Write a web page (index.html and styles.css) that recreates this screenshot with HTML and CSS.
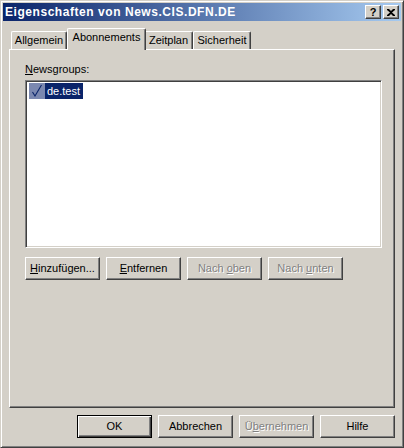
FILE: index.html
```html
<!DOCTYPE html>
<html>
<head>
<meta charset="utf-8">
<link rel="stylesheet" href="styles.css">
</head>
<body>
<div class="window">
  <div class="titlebar">
    <span class="title">Eigenschaften von News.CIS.DFN.DE</span>
    <div class="caption-buttons">
      <div class="cbtn">?</div>
      <div class="cbtn cbtn-close">
        <svg width="8" height="7" viewBox="0 0 8 7"><path d="M0 0h2l2 2 2-2h2v1L5 3.5 8 6v1H6L4 5 2 7H0V6l3-2.5L0 1z" fill="#000"/></svg>
      </div>
    </div>
  </div>
  <div class="body">
    <div class="tabs">
      <div class="tab t1">Allgemein</div>
      <div class="tab tab-active t2">Abonnements</div>
      <div class="tab t3">Zeitplan</div>
      <div class="tab t4">Sicherheit</div>
    </div>
    <div class="panel">
      <div class="label"><u>N</u>ewsgroups:</div>
      <div class="listbox">
        <div class="item">
          <span class="state">
            <svg width="16" height="16" viewBox="0 0 16 16"><path d="M3.5 9 L6 13 L12.5 2" fill="none" stroke="#0a246a" stroke-width="1.1"/></svg>
          </span>
          <span class="item-text">de.test</span>
        </div>
      </div>
      <div class="btnrow">
        <div class="btn"><span><u>H</u>inzufügen...</span></div>
        <div class="btn"><span><u>E</u>ntfernen</span></div>
        <div class="btn disabled"><span>Nach <u>o</u>ben</span></div>
        <div class="btn disabled"><span>Nach <u>u</u>nten</span></div>
      </div>
    </div>
    <div class="footer">
      <div class="btn default"><span>OK</span></div>
      <div class="btn"><span>Abbrechen</span></div>
      <div class="btn disabled"><span>Ü<u>b</u>ernehmen</span></div>
      <div class="btn"><span>Hilfe</span></div>
    </div>
  </div>
</div>
</body>
</html>
```

FILE: styles.css
```css
html, body {
  margin: 0;
  padding: 0;
  background: #d4d0c8;
}
body {
  font-family: "Liberation Sans", Arial, sans-serif;
  font-size: 11px;
  color: #000;
}
.window {
  width: 404px;
  height: 448px;
  box-sizing: border-box;
  border: 1px solid;
  border-color: #d4d0c8 #404040 #404040 #d4d0c8;
  box-shadow: inset 1px 1px 0 #fff, inset -1px -1px 0 #808080;
  display: flex;
  flex-direction: column;
}
.window > .titlebar {
  margin: 2px 2px 0 2px;
}
.titlebar {
  height: 18px;
  background: linear-gradient(to right, #0a246a, #a6caf0);
  display: flex;
  align-items: center;
  justify-content: space-between;
  padding: 0 2px 0 2px;
}
.title {
  color: #fff;
  font-weight: bold;
  font-size: 12px;
  font-family: "Liberation Sans", Arial, sans-serif;
  letter-spacing: 0.55px;
}
.caption-buttons {
  display: flex;
  gap: 2px;
}
.cbtn {
  width: 16px;
  height: 14px;
  box-sizing: border-box;
  background: #d4d0c8;
  border: 1px solid;
  border-color: #fff #404040 #404040 #fff;
  box-shadow: inset -1px -1px 0 #808080;
  display: flex;
  align-items: center;
  justify-content: center;
  font-weight: bold;
  font-size: 11px;
  line-height: 12px;
  padding-bottom: 1px;
}
.cbtn-close svg {
  display: block;
  margin-top: 1px;
}
.body {
  flex: 1;
  display: flex;
  flex-direction: column;
  padding: 7px 8px 0 8px;
}
.tabs {
  display: flex;
  align-items: flex-end;
  height: 21px;
  padding-left: 2px;
  position: relative;
  z-index: 1;
}
.tab {
  box-sizing: border-box;
  height: 18px;
  border-left: 1px solid #fff;
  border-top: 1px solid #fff;
  border-right: 1px solid #404040;
  box-shadow: inset -1px 0 0 #808080;
  border-top-left-radius: 2px;
  border-top-right-radius: 2px;
  padding: 2px 0 0 0;
  text-align: center;
  background: #d4d0c8;
}
.t1 { width: 56px; }
.t2 { width: 79px; }
.t3 { width: 49px; }
.t4 { width: 58px; }
.tab-active {
  height: 22px;
  margin: 0 -2px -1px 0;
  padding-top: 2px;
  position: relative;
  z-index: 2;
}
.panel {
  height: 359px;
  box-sizing: border-box;
  border-left: 1px solid #fff;
  border-top: 1px solid #fff;
  border-right: 1px solid #404040;
  border-bottom: 1px solid #404040;
  box-shadow: inset -1px -1px 0 #808080;
  padding: 13px 0 0 15px;
}
.label {
  height: 13px;
  line-height: 13px;
  margin-bottom: 4px;
}
.listbox {
  width: 357px;
  height: 168px;
  box-sizing: border-box;
  background: #fff;
  border: 1px solid;
  border-color: #808080 #fff #fff #808080;
  box-shadow: inset 1px 1px 0 #404040, inset -1px -1px 0 #d4d0c8;
  padding: 2px 2px 0 3px;
}
.item {
  display: flex;
  height: 16px;
}
.state {
  width: 16px;
  height: 16px;
  background: #7b88b0;
}
.state svg { display: block; }
.item-text {
  background: #0a246a;
  color: #fff;
  line-height: 16px;
  padding: 0 3px 0 2px;
}
.btnrow {
  display: flex;
  gap: 6px;
  margin-top: 9px;
}
.btn {
  width: 75px;
  height: 23px;
  box-sizing: border-box;
  border: 1px solid;
  border-color: #fff #404040 #404040 #fff;
  box-shadow: inset -1px -1px 0 #808080;
  display: flex;
  align-items: center;
  justify-content: center;
  padding-bottom: 1px;
  white-space: nowrap;
}
.btn.disabled {
  color: #808080;
  text-shadow: 1px 1px 0 #fff;
}
.btn.default {
  border: 1px solid #000;
  box-shadow: inset 1px 1px 0 #fff, inset -1px -1px 0 #404040, inset -2px -2px 0 #808080;
}
.footer {
  display: flex;
  justify-content: flex-end;
  gap: 6px;
  margin-top: 7px;
}
```
